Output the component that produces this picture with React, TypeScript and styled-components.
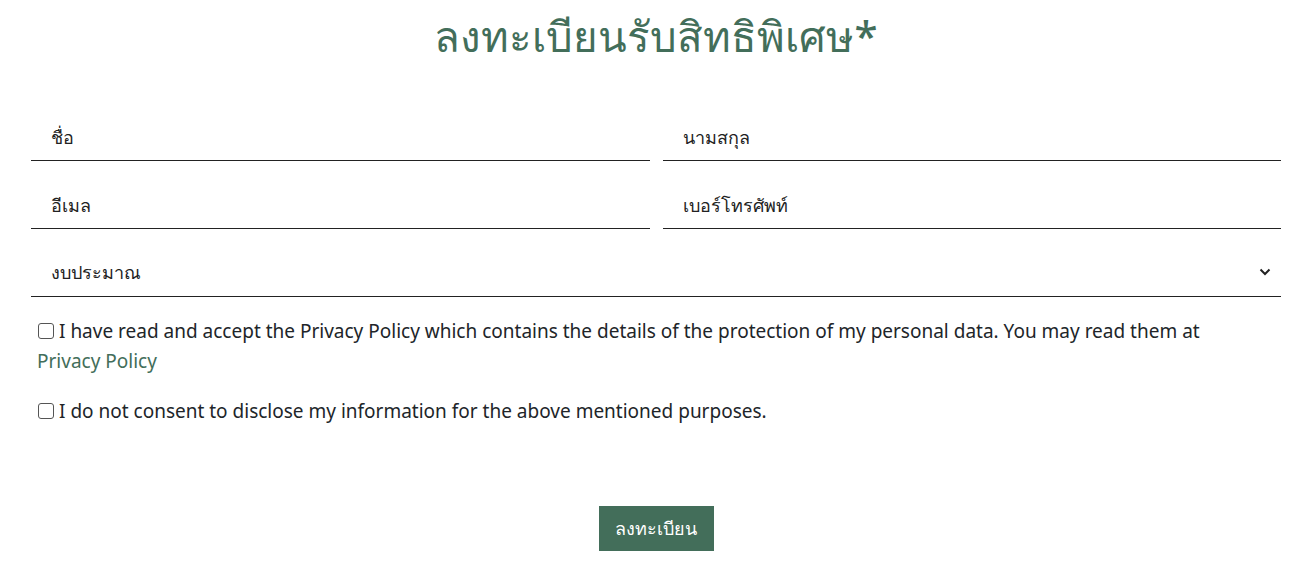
import React from "react";
import styled, { createGlobalStyle } from "styled-components";

const Global = createGlobalStyle`
  html, body { margin: 0; padding: 0; background: #fff; }
  body { font-family: "Noto Sans", "Open Sans", sans-serif; color: #212529; }
`;

const Page = styled.div`
  padding: 0 22px 0 31px;
`;

const Title = styled.h1`
  margin: 0;
  padding-top: 8px;
  height: 72px;
  text-align: center;
  font-size: 42px;
  font-weight: 500;
  line-height: 56px;
  color: #436e5a;
`;

const Form = styled.form`
  display: flex;
  flex-direction: column;
  padding-top: 13px;
`;

const Row = styled.div`
  display: grid;
  grid-template-columns: 1fr 1fr;
  column-gap: 13px;
`;

const Field = styled.div<{ $full?: boolean }>`
  position: relative;
  height: 67px;
  display: flex;
  align-items: flex-end;
  border-bottom: 1px solid #222;
  grid-column: ${(p) => (p.$full ? "1 / -1" : "auto")};
`;

const Input = styled.input`
  width: 100%;
  box-sizing: border-box;
  border: none;
  outline: none;
  background: transparent;
  font-family: inherit;
  font-size: 18px;
  color: #222;
  padding: 0 20px 11px 20px;
  height: 36px;
  &::placeholder { color: #222; }
`;

const Select = styled.div`
  width: 100%;
  display: flex;
  align-items: center;
  justify-content: space-between;
  font-size: 18px;
  color: #222;
  padding: 0 10px 12px 20px;
  height: 36px;
  box-sizing: border-box;
`;

const Consents = styled.div`
  display: flex;
  flex-direction: column;
  gap: 20px;
  padding: 19px 0 0 6px;
`;

const Consent = styled.label`
  display: block;
  font-size: 19px;
  line-height: 30px;
  color: #212529;
`;

const Box = styled.span`
  display: inline-block;
  width: 16px;
  height: 16px;
  border: 1px solid #555;
  border-radius: 3px;
  box-sizing: border-box;
  margin: 0 5px 0 1px;
  vertical-align: -1px;
`;

const Link = styled.a`
  color: #436e5a;
  text-decoration: none;
  white-space: nowrap;
`;

const Actions = styled.div`
  display: flex;
  justify-content: center;
  padding-top: 80px;
`;

const Button = styled.button`
  background: #436e5a;
  color: #fff;
  border: none;
  width: 115px;
  height: 45px;
  font-family: inherit;
  font-size: 18px;
  cursor: pointer;
`;

const Chevron = () => (
  <svg width="12" height="8" viewBox="0 0 12 8" fill="none">
    <path d="M1.5 1.5 L6 6 L10.5 1.5" stroke="#222" strokeWidth="2" />
  </svg>
);

export default function App() {
  return (
    <>
      <Global />
      <Page>
        <Title>ลงทะเบียนรับสิทธิพิเศษ*</Title>
        <Form>
          <Row>
            <Field>
              <Input placeholder="ชื่อ" />
            </Field>
            <Field>
              <Input placeholder="นามสกุล" />
            </Field>
            <Field>
              <Input placeholder="อีเมล" />
            </Field>
            <Field>
              <Input placeholder="เบอร์โทรศัพท์" />
            </Field>
            <Field $full>
              <Select>
                <span>งบประมาณ</span>
                <Chevron />
              </Select>
            </Field>
          </Row>
          <Consents>
            <Consent>
              <Box />I have read and accept the Privacy Policy which contains the details of the protection of my personal data. You may read them at{" "}
              <Link href="#">Privacy Policy</Link>
            </Consent>
            <Consent>
              <Box />I do not consent to disclose my information for the above mentioned purposes.
            </Consent>
          </Consents>
          <Actions>
            <Button type="button">ลงทะเบียน</Button>
          </Actions>
        </Form>
      </Page>
    </>
  );
}
